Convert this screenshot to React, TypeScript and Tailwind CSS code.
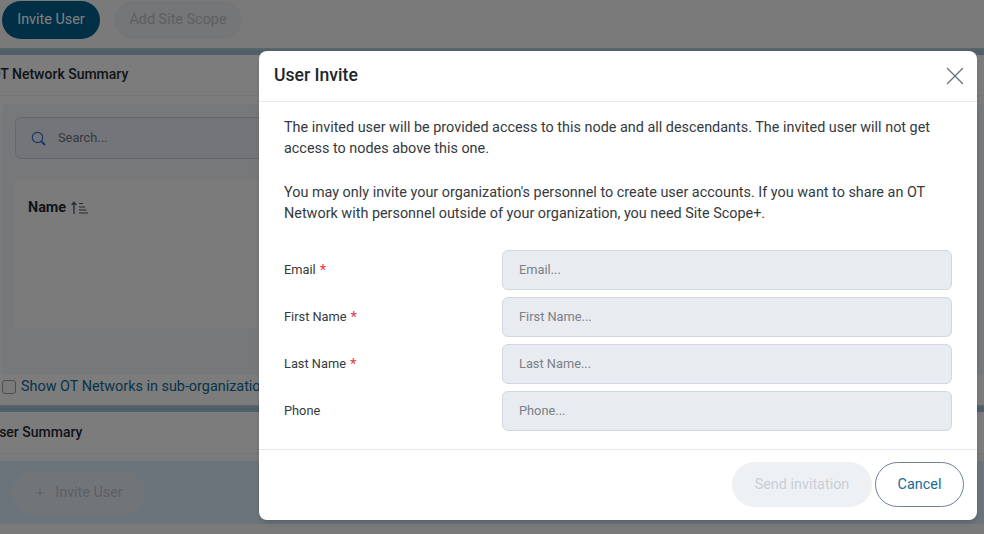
import { X, Plus } from 'lucide-react';

const fields = [
  { label: 'Email', placeholder: 'Email...', required: true },
  { label: 'First Name', placeholder: 'First Name...', required: true },
  { label: 'Last Name', placeholder: 'Last Name...', required: true },
  { label: 'Phone', placeholder: 'Phone...', required: false },
];

export default function App() {
  return (
    <div className="relative w-[984px] h-[534px] overflow-hidden bg-[#f5f5f5] font-['Roboto',sans-serif]">
      {/* PAGE BEHIND THE DIALOG */}
      <div className="flex gap-[14px] pl-[2px] pt-[1px] h-[48px]">
        <button className="h-[38px] w-[98px] rounded-full bg-[#005f8c] text-white text-[14.4px]">
          Invite User
        </button>
        <button className="h-[38px] w-[128px] rounded-full bg-[#e9ecef] text-[#b9bfc6] text-[14.4px]">
          Add Site Scope
        </button>
      </div>

      <div className="h-[7px] bg-gradient-to-b from-[#b8ccd6] via-[#9bbdd0] to-[#a4c2d4]" />
      <div className="h-[350px] bg-[#f8f8f8] flex flex-col">
        <div className="h-[41px] shrink-0 flex items-center pb-[2px] -ml-[9px] border-b border-[#ececec] text-sm font-medium text-[#1f2937] whitespace-nowrap">
          OT Network Summary
        </div>
        <div className="shrink-0 ml-[2px] h-[271px] pt-[13px] px-[13px] mt-[8px] bg-[#eef0f3] rounded-sm">
          <div className="h-[42px] flex items-center gap-[12px] pl-[15px] rounded-md border border-[#c9ced6] bg-[#e8ebf0] text-[12.8px] text-[#6b7280]">
            <svg width="15" height="15" viewBox="0 0 15 15" fill="none" className="text-[#2a6fd6] shrink-0">
              <circle cx="6.5" cy="6.5" r="5.2" stroke="currentColor" strokeWidth="1.2" />
              <path d="M10.5 10.5 14 14" stroke="currentColor" strokeWidth="2" />
            </svg>
            <span>Search...</span>
          </div>
          <div className="mt-[21px] h-[148px] bg-[#f6f6f6] pl-[13px] pt-[18px] flex items-start">
            <span className="text-[14.4px] leading-[20px] font-bold text-[#1f2937]">Name</span>
            <svg width="17" height="14" viewBox="0 0 17 14" fill="none" className="ml-[5px] mt-[3px] text-[#4b5563]">
              <path d="M3 13V1M.7 4 3 1.2 5.3 4" stroke="currentColor" strokeWidth="1.3" />
              <path d="M8 2.5h4M8 6h6M8 9h7.5M8 12h9" stroke="currentColor" strokeWidth="1.2" />
            </svg>
          </div>
        </div>
        <label className="ml-[2px] h-[24px] flex items-center gap-[5px] text-[14.4px] text-[#0b6a96] whitespace-nowrap">
          <span className="w-[14px] h-[14px] rounded-[3px] border border-[#9aa0a6] bg-[#f5f5f5]" />
          Show OT Networks in sub-organizations
        </label>
      </div>

      <div className="h-[7px] bg-gradient-to-b from-[#b8ccd6] via-[#9bbdd0] to-[#a4c2d4]" />
      <div className="h-[42px] bg-[#f8f8f8] flex items-center pb-[1px] -ml-[10px] border-b border-[#ececec] text-sm font-medium text-[#1f2937]">
        User Summary
      </div>
      <div className="mt-[7px] h-[63px] bg-[#d6e6f6] flex items-center pl-[12px]">
        <button className="h-[44px] w-[133px] rounded-full bg-[#e4eaf0] flex items-center justify-center gap-[9px] text-[14.4px] text-[#b9bfc6]">
          <Plus size={12} />
          Invite User
        </button>
      </div>

      {/* OVERLAY */}
      <div className="absolute inset-0 bg-black/50" />

      {/* DIALOG */}
      <div className="absolute left-[259px] top-[51px] w-[718px] h-[469px] bg-white rounded-lg shadow-md flex flex-col">
        <div className="h-[51px] flex items-center justify-between pl-[15px] pr-[7px] pb-[2px] border-b border-[#e5e7eb]">
          <h2 className="text-[17.6px] font-medium text-[#212529]">User Invite</h2>
          <X size={30} strokeWidth={1.1} className="text-[#6b7280] mt-[2px]" />
        </div>

        <div className="flex-1 px-[25px] pt-[15px] text-[14.4px] leading-[21px] text-[#343a40]">
          <p>
            The invited user will be provided access to this node and all descendants. The invited user will not get
            access to nodes above this one.
          </p>
          <p className="mt-[23px]">
            You may only invite your organization's personnel to create user accounts. If you want to share an OT
            Network with personnel outside of your organization, you need Site Scope+.
          </p>

          <div className="mt-[26px] flex flex-col gap-[7px]">
            {fields.map((f) => (
              <div key={f.label} className="flex items-center">
                <label className="w-[218px] pb-[2px] text-[12.8px] text-[#343a40] flex items-center">
                  {f.label}
                  {f.required && <span className="ml-[4px] mt-[3px] text-[15px] leading-none text-[#e5394f]">*</span>}
                </label>
                <input
                  placeholder={f.placeholder}
                  className="w-[450px] h-[40px] px-[16px] pb-[2px] rounded-md border border-[#d1d7e0] bg-[#e8ebf0] text-[12.8px] placeholder:text-[#7b8087]"
                />
              </div>
            ))}
          </div>
        </div>

        <div className="h-[71px] flex items-center justify-end gap-[3px] pr-[13px] pb-[2px] border-t border-[#e5e7eb]">
          <button className="w-[140px] h-[45px] pt-[2px] rounded-full bg-[#eef1f4] text-[14.4px] text-[#c9ced6]">
            Send invitation
          </button>
          <button className="w-[89px] h-[45px] pt-[2px] rounded-full border border-[#6f8295] bg-white text-[14.4px] text-[#1a6a94]">
            Cancel
          </button>
        </div>
      </div>
    </div>
  );
}
